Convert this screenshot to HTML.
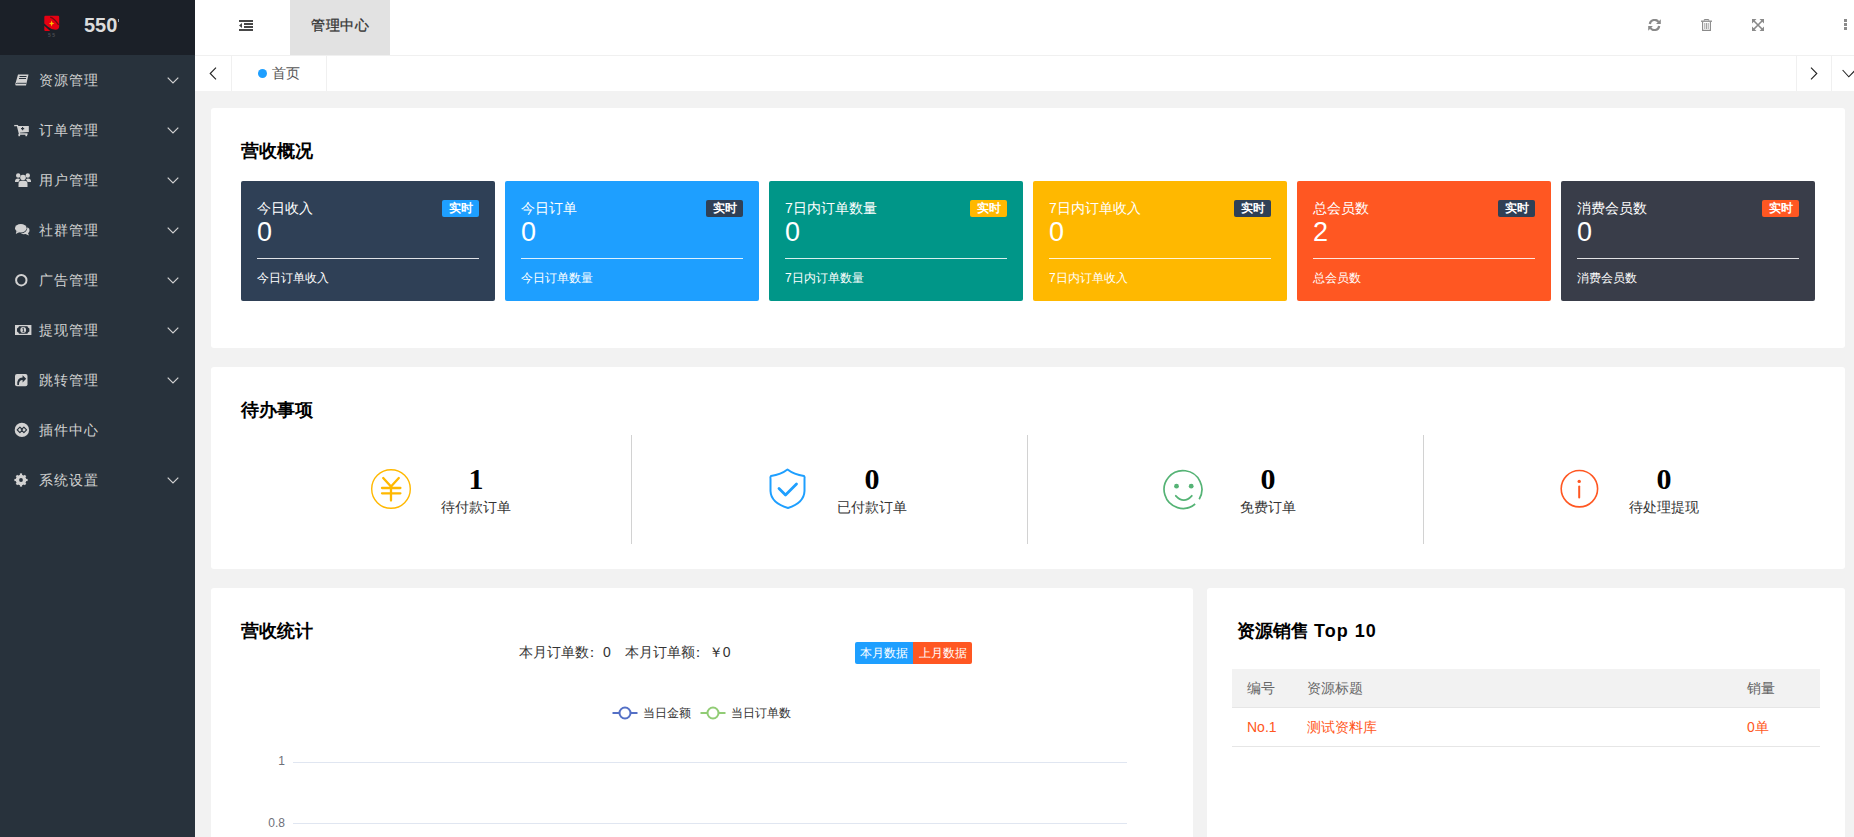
<!DOCTYPE html>
<html><head><meta charset="utf-8">
<style>
*{margin:0;padding:0;box-sizing:border-box}
html,body{width:1854px;height:837px;overflow:hidden;background:#f2f2f2;font-family:"Liberation Sans",sans-serif;font-size:14px;color:#333}
.abs{position:absolute}
#side{position:absolute;left:0;top:0;width:195px;height:837px;background:#28323c}
#logo{position:absolute;left:0;top:0;width:195px;height:55px;background:#1b2028}
.mi{position:absolute;left:0;width:195px;height:50px;line-height:50px;color:#d2d2d2;font-size:14px}
.mi .t{position:absolute;left:39px;top:0;letter-spacing:1px}
.mi svg.ic{position:absolute}
.mi svg.ch{position:absolute;left:167px;top:22px}
#hdr{position:absolute;left:195px;top:0;width:1659px;height:55px;background:#fff}
#tabs{position:absolute;left:195px;top:55px;width:1659px;height:36px;background:#fff;border-top:1px solid #f0f0f0}
.card{position:absolute;background:#fff;border-radius:3px}
.h2{position:absolute;font-size:18px;font-weight:bold;color:#000;line-height:24px;white-space:nowrap}
.sc{position:absolute;top:181px;width:254px;height:120px;border-radius:2px;color:#fff}
.sc .a{position:absolute;left:16px;top:197px}
</style></head><body>
<div id="side">
  <div id="logo">
    <svg class="abs" style="left:44px;top:15px" width="17" height="24" viewBox="0 0 17 24">
      <path d="M0.3 2 Q0.3 0.8 1.5 0.8 H14 Q15.2 0.8 15.2 2 V11 Q15.2 14.8 11.5 14.8 Q7.5 14.8 4 11.8 L0.3 8.6Z" fill="#e60012"/>
      <path d="M0.3 10.8 L6.2 16 H1.3 Q0.3 16 0.3 15Z" fill="#e60012"/>
      <path d="M6.2 2.2 Q10.5 3.6 14.6 9.8" stroke="#5a0a10" stroke-width="1.3" fill="none" opacity="0.85"/>
      <path d="M7.6 5.6 L8.4 7.7 L10.4 8.5 L8.4 9.3 L7.6 11.4 L6.8 9.3 L4.8 8.5 L6.8 7.7Z" fill="#ffc000"/>
      <text x="3.9" y="22" font-size="5" fill="#4a4d52" font-family="Liberation Sans" font-weight="bold" style="letter-spacing:1.6px">55</text>
    </svg>
    <div class="abs" style="left:84px;top:13px;font-size:20px;font-weight:bold;color:#dcdcdc;line-height:24px">550</div>
    <div class="abs" style="left:118px;top:19px;width:1px;height:3px;background:#9ab"></div>
  </div>
<div class="mi" style="top:55px"><svg class="ic" style="left:15px;top:19px" width="14" height="13" viewBox="0 0 14 13"><path d="M3 0.5 H13.5 L11 11.5 H1.5 Q0 11.5 0.3 10 Z" fill="#d2d2d2"/><path d="M4.5 2.5 H11.5 M4 4.5 H11" stroke="#28323c" stroke-width="1"/><path d="M1.2 10 Q1.3 9.3 2.2 9.3 H11.3" stroke="#28323c" stroke-width="0.9" fill="none"/></svg><span class="t">资源管理</span><svg class="ch" width="12" height="7" viewBox="0 0 12 7"><path d="M0.7 0.7 L6 6 L11.3 0.7" stroke="#d2d2d2" stroke-width="1.2" fill="none"/></svg></div>
<div class="mi" style="top:105px"><svg class="ic" style="left:14px;top:19px" width="16" height="14" viewBox="0 0 16 14"><path d="M0.2 1.6 H4" stroke="#d2d2d2" stroke-width="1.3"/><path d="M3.4 1.3 L5.6 10 H13.6" stroke="#d2d2d2" stroke-width="1.4" fill="none"/><path d="M3.8 2 H14.8 V7.9 L5.3 8.7Z" fill="#d2d2d2"/><rect x="4.4" y="10" width="1.7" height="2.2" fill="#d2d2d2"/><rect x="11.4" y="10" width="1.7" height="2.2" fill="#d2d2d2"/><path d="M8.6 3 V6.2 M7 4.6 H10.2" stroke="#28323c" stroke-width="1.1"/></svg><span class="t">订单管理</span><svg class="ch" width="12" height="7" viewBox="0 0 12 7"><path d="M0.7 0.7 L6 6 L11.3 0.7" stroke="#d2d2d2" stroke-width="1.2" fill="none"/></svg></div>
<div class="mi" style="top:155px"><svg class="ic" style="left:15px;top:18px" width="16" height="14" viewBox="0 0 16 14"><circle cx="3.2" cy="2.5" r="2.2" fill="#d2d2d2"/><circle cx="12.8" cy="2.5" r="2.2" fill="#d2d2d2"/><circle cx="8" cy="4.5" r="2.8" fill="#d2d2d2"/><path d="M0 8.5 Q0 5.5 3 5.5 Q4.5 5.5 5 6.5 Q3.5 8 3.5 9 H0Z M16 8.5 Q16 5.5 13 5.5 Q11.5 5.5 11 6.5 Q12.5 8 12.5 9 H16Z" fill="#d2d2d2"/><path d="M3.5 14 V11 Q3.5 7.8 6.5 7.8 H9.5 Q12.5 7.8 12.5 11 V14Z" fill="#d2d2d2"/></svg><span class="t">用户管理</span><svg class="ch" width="12" height="7" viewBox="0 0 12 7"><path d="M0.7 0.7 L6 6 L11.3 0.7" stroke="#d2d2d2" stroke-width="1.2" fill="none"/></svg></div>
<div class="mi" style="top:205px"><svg class="ic" style="left:15px;top:19px" width="15" height="12" viewBox="0 0 15 12"><ellipse cx="5.8" cy="4.2" rx="5.8" ry="4.2" fill="#d2d2d2"/><path d="M1.5 7 L0.8 10 L4.5 8Z" fill="#d2d2d2"/><path d="M12.5 3.2 Q15 4.5 14.5 7 Q14 8.6 13 9.3 L14 11.5 L10.5 10 Q7.5 10.5 5.8 9.4 Q11.8 9 12.5 3.2Z" fill="#d2d2d2"/></svg><span class="t">社群管理</span><svg class="ch" width="12" height="7" viewBox="0 0 12 7"><path d="M0.7 0.7 L6 6 L11.3 0.7" stroke="#d2d2d2" stroke-width="1.2" fill="none"/></svg></div>
<div class="mi" style="top:255px"><svg class="ic" style="left:15px;top:19px" width="13" height="13" viewBox="0 0 13 13"><circle cx="6.3" cy="6.2" r="5.2" stroke="#d2d2d2" stroke-width="2" fill="none"/></svg><span class="t">广告管理</span><svg class="ch" width="12" height="7" viewBox="0 0 12 7"><path d="M0.7 0.7 L6 6 L11.3 0.7" stroke="#d2d2d2" stroke-width="1.2" fill="none"/></svg></div>
<div class="mi" style="top:305px"><svg class="ic" style="left:14.5px;top:20px" width="17" height="11" viewBox="0 0 17 11"><rect x="0" y="0" width="16.4" height="10" fill="#d2d2d2"/><path d="M4 1.3 H12.4 L13 2.5 L14.4 3.4 V6.6 L13 7.5 L12.4 8.7 H4 L3.4 7.5 L2 6.6 V3.4 L3.4 2.5Z" fill="#28323c"/><circle cx="8.2" cy="5" r="2.9" fill="#d2d2d2"/><path d="M7.4 3.8 L8.4 3.2 V6.6 M7.5 6.7 H9.3" stroke="#28323c" stroke-width="0.9" fill="none"/></svg><span class="t">提现管理</span><svg class="ch" width="12" height="7" viewBox="0 0 12 7"><path d="M0.7 0.7 L6 6 L11.3 0.7" stroke="#d2d2d2" stroke-width="1.2" fill="none"/></svg></div>
<div class="mi" style="top:355px"><svg class="ic" style="left:15px;top:19px" width="13" height="13" viewBox="0 0 13 13"><rect x="0" y="0" width="12.5" height="12.2" rx="2" fill="#d2d2d2"/><path d="M2.3 11 Q1.6 3.7 7.6 3.5 V1.2 L11.2 4.8 L7.6 8.4 V6 Q4 5.9 3.9 11Z" fill="#28323c"/></svg><span class="t">跳转管理</span><svg class="ch" width="12" height="7" viewBox="0 0 12 7"><path d="M0.7 0.7 L6 6 L11.3 0.7" stroke="#d2d2d2" stroke-width="1.2" fill="none"/></svg></div>
<div class="mi" style="top:405px"><svg class="ic" style="left:14px;top:17px" width="16" height="16" viewBox="0 0 16 16"><circle cx="7.9" cy="7.9" r="7.2" fill="#d2d2d2"/><path d="M3.2 7.9 L5.9 5.2 L8.6 7.9 L5.9 10.6Z M7.2 7.9 L9.9 5.2 L12.6 7.9 L9.9 10.6Z" stroke="#28323c" stroke-width="1.2" fill="none" stroke-linejoin="round"/></svg><span class="t">插件中心</span></div>
<div class="mi" style="top:455px"><svg class="ic" style="left:14px;top:18px" width="14" height="14" viewBox="0 0 14 14"><g fill="#d2d2d2"><circle cx="7" cy="7" r="5.3"/><rect x="5.9" y="0.4" width="2.2" height="13.2"/><rect x="0.4" y="5.9" width="13.2" height="2.2"/><rect x="5.9" y="0.6" width="2.2" height="12.8" transform="rotate(45 7 7)"/><rect x="5.9" y="0.6" width="2.2" height="12.8" transform="rotate(-45 7 7)"/></g><circle cx="7" cy="7" r="1.9" fill="#28323c"/></svg><span class="t">系统设置</span><svg class="ch" width="12" height="7" viewBox="0 0 12 7"><path d="M0.7 0.7 L6 6 L11.3 0.7" stroke="#d2d2d2" stroke-width="1.2" fill="none"/></svg></div>
</div>
<div id="hdr">
  <svg class="abs" style="left:44px;top:20px" width="14" height="11" viewBox="0 0 14 11"><path d="M0 0 H14 V2 H0Z M5 3 H14 V5 H5Z M5 6 H14 V8 H5Z M0 9 H14 V11 H0Z" fill="#474747"/><path d="M0 5.5 L3 3 V8Z" fill="#474747"/></svg>
  <div class="abs" style="left:95px;top:0;width:100px;height:55px;background:#e2e2e2;line-height:50px;text-align:center;color:#333;font-size:14px;letter-spacing:0.5px;-webkit-text-stroke:0.3px #333">管理中心</div>
  <svg class="abs" style="left:1453px;top:19px" width="13" height="12" viewBox="0 0 13 12"><path d="M1.8 5 A4.8 4.8 0 0 1 10.5 3" stroke="#8a8a8a" stroke-width="2.2" fill="none"/><path d="M12.8 0.3 V5 H8.1Z" fill="#8a8a8a"/><path d="M11.2 7 A4.8 4.8 0 0 1 2.5 9" stroke="#8a8a8a" stroke-width="2.2" fill="none"/><path d="M0.2 11.7 V7 H4.9Z" fill="#8a8a8a"/></svg>
  <svg class="abs" style="left:1506px;top:19px" width="11" height="12" viewBox="0 0 11 12"><path d="M0 2.2 H11" stroke="#8a8a8a" stroke-width="1.3"/><path d="M3.3 1.6 V0.5 H7.7 V1.6" stroke="#8a8a8a" stroke-width="1" fill="none"/><path d="M1.6 2.5 V11.4 H9.4 V2.5" stroke="#8a8a8a" stroke-width="1.1" fill="none"/><path d="M3.8 4 V10 M5.5 4 V10 M7.2 4 V10" stroke="#8a8a8a" stroke-width="0.8"/></svg>
  <svg class="abs" style="left:1557px;top:19px" width="12" height="12" viewBox="0 0 12 12"><path d="M1.5 1.5 L10.5 10.5 M10.5 1.5 L1.5 10.5" stroke="#8a8a8a" stroke-width="1.6"/><path d="M0 0 H4.5 L0 4.5Z M12 0 V4.5 L7.5 0Z M0 12 V7.5 L4.5 12Z M12 12 H7.5 L12 7.5Z" fill="#8a8a8a"/></svg>
  <div class="abs" style="left:1649px;top:19px;width:3px;height:3px;background:#8a8a8a;box-shadow:0 4px 0 #8a8a8a,0 8px 0 #8a8a8a"></div>
</div>
<div id="tabs">
  <svg class="abs" style="left:14px;top:11px" width="8" height="13" viewBox="0 0 8 13"><path d="M7 0.6 L1.2 6.5 L7 12.4" stroke="#222" stroke-width="1.1" fill="none"/></svg>
  <div class="abs" style="left:36px;top:0;width:1px;height:35px;background:#f0f0f0"></div>
  <div class="abs" style="left:131px;top:0;width:1px;height:35px;background:#f0f0f0"></div>
  <div class="abs" style="left:63px;top:13px;width:9px;height:9px;border-radius:50%;background:#1e9fff"></div>
  <div class="abs" style="left:77px;top:0;line-height:34px;color:#555;font-size:14px">首页</div>
  <div class="abs" style="left:1601px;top:0;width:1px;height:35px;background:#f0f0f0"></div>
  <div class="abs" style="left:1636px;top:0;width:1px;height:35px;background:#f0f0f0"></div>
  <svg class="abs" style="left:1615px;top:11px" width="8" height="13" viewBox="0 0 8 13"><path d="M1 0.6 L6.8 6.5 L1 12.4" stroke="#222" stroke-width="1.1" fill="none"/></svg>
  <svg class="abs" style="left:1647px;top:13px" width="14" height="9" viewBox="0 0 14 9"><path d="M0.6 1 L6.8 7.8 L13.4 1" stroke="#222" stroke-width="1.1" fill="none"/></svg>
</div>
<div class="card" style="left:211px;top:108px;width:1634px;height:240px"></div>
<div class="h2" style="left:241px;top:139px">营收概况</div>
<div class="sc" style="left:241px;background:#2f4056">
  <div class="abs" style="left:16px;top:17px;font-size:14px;line-height:20px">今日收入</div>
  <div class="abs" style="left:201px;top:19px;width:37px;height:17px;border-radius:2px;background:#1e9fff;font-size:12px;font-weight:bold;line-height:17px;text-align:center">实时</div>
  <div class="abs" style="left:16px;top:36px;font-size:27px;line-height:30px">0</div>
  <div class="abs" style="left:16px;top:77px;width:222px;height:1px;background:rgba(255,255,255,.85)"></div>
  <div class="abs" style="left:16px;top:88px;font-size:12px;line-height:18px">今日订单收入</div>
</div>
<div class="sc" style="left:505px;background:#1e9fff">
  <div class="abs" style="left:16px;top:17px;font-size:14px;line-height:20px">今日订单</div>
  <div class="abs" style="left:201px;top:19px;width:37px;height:17px;border-radius:2px;background:#2f4056;font-size:12px;font-weight:bold;line-height:17px;text-align:center">实时</div>
  <div class="abs" style="left:16px;top:36px;font-size:27px;line-height:30px">0</div>
  <div class="abs" style="left:16px;top:77px;width:222px;height:1px;background:rgba(255,255,255,.85)"></div>
  <div class="abs" style="left:16px;top:88px;font-size:12px;line-height:18px">今日订单数量</div>
</div>
<div class="sc" style="left:769px;background:#009688">
  <div class="abs" style="left:16px;top:17px;font-size:14px;line-height:20px">7日内订单数量</div>
  <div class="abs" style="left:201px;top:19px;width:37px;height:17px;border-radius:2px;background:#ffb800;font-size:12px;font-weight:bold;line-height:17px;text-align:center">实时</div>
  <div class="abs" style="left:16px;top:36px;font-size:27px;line-height:30px">0</div>
  <div class="abs" style="left:16px;top:77px;width:222px;height:1px;background:rgba(255,255,255,.85)"></div>
  <div class="abs" style="left:16px;top:88px;font-size:12px;line-height:18px">7日内订单数量</div>
</div>
<div class="sc" style="left:1033px;background:#ffb800">
  <div class="abs" style="left:16px;top:17px;font-size:14px;line-height:20px">7日内订单收入</div>
  <div class="abs" style="left:201px;top:19px;width:37px;height:17px;border-radius:2px;background:#2f4056;font-size:12px;font-weight:bold;line-height:17px;text-align:center">实时</div>
  <div class="abs" style="left:16px;top:36px;font-size:27px;line-height:30px">0</div>
  <div class="abs" style="left:16px;top:77px;width:222px;height:1px;background:rgba(255,255,255,.85)"></div>
  <div class="abs" style="left:16px;top:88px;font-size:12px;line-height:18px">7日内订单收入</div>
</div>
<div class="sc" style="left:1297px;background:#ff5722">
  <div class="abs" style="left:16px;top:17px;font-size:14px;line-height:20px">总会员数</div>
  <div class="abs" style="left:201px;top:19px;width:37px;height:17px;border-radius:2px;background:#2f4056;font-size:12px;font-weight:bold;line-height:17px;text-align:center">实时</div>
  <div class="abs" style="left:16px;top:36px;font-size:27px;line-height:30px">2</div>
  <div class="abs" style="left:16px;top:77px;width:222px;height:1px;background:rgba(255,255,255,.85)"></div>
  <div class="abs" style="left:16px;top:88px;font-size:12px;line-height:18px">总会员数</div>
</div>
<div class="sc" style="left:1561px;background:#393d49">
  <div class="abs" style="left:16px;top:17px;font-size:14px;line-height:20px">消费会员数</div>
  <div class="abs" style="left:201px;top:19px;width:37px;height:17px;border-radius:2px;background:#ff5722;font-size:12px;font-weight:bold;line-height:17px;text-align:center">实时</div>
  <div class="abs" style="left:16px;top:36px;font-size:27px;line-height:30px">0</div>
  <div class="abs" style="left:16px;top:77px;width:222px;height:1px;background:rgba(255,255,255,.85)"></div>
  <div class="abs" style="left:16px;top:88px;font-size:12px;line-height:18px">消费会员数</div>
</div>
<div class="card" style="left:211px;top:367px;width:1634px;height:202px"></div>
<div class="h2" style="left:241px;top:398px">待办事项</div>
<div class="abs" style="left:631px;top:435px;width:1px;height:109px;background:#d2d2d2"></div>
<div class="abs" style="left:1027px;top:435px;width:1px;height:109px;background:#d2d2d2"></div>
<div class="abs" style="left:1423px;top:435px;width:1px;height:109px;background:#d2d2d2"></div>
<svg class="abs" style="left:370px;top:468px" width="42" height="42" viewBox="0 0 42 42"><circle cx="21" cy="21" r="19.3" stroke="#ffb800" stroke-width="1.4" fill="none"/><path d="M13.2 10 L21 18.5 L28.8 10 M21 18.5 V32.5 M12 20 H30.4 M12 25.3 H30.4" stroke="#ffb800" stroke-width="2.3" stroke-linecap="round" fill="none"/></svg>
<div class="abs" style="left:416px;top:463px;width:120px;text-align:center;font-family:'Liberation Serif',serif;font-weight:bold;font-size:30px;line-height:32px;color:#000">1</div>
<div class="abs" style="left:416px;top:497px;width:120px;text-align:center;font-size:14px;line-height:20px;color:#333">待付款订单</div>
<svg class="abs" style="left:767px;top:467px" width="40" height="43" viewBox="0 0 40 43"><path d="M20.5 2.5 Q14 7.5 4 9 Q3 10 3.5 12 V24 Q4 36 21 41 Q37 36 37.5 24 V12 Q38 10 37 9 Q27 7.5 20.5 2.5Z" stroke="#1e9fff" stroke-width="2" fill="none" stroke-linejoin="round"/><path d="M12 21.5 L18.5 28 L29.5 17" stroke="#1e9fff" stroke-width="2.8" stroke-linecap="round" stroke-linejoin="round" fill="none"/></svg>
<div class="abs" style="left:812px;top:463px;width:120px;text-align:center;font-family:'Liberation Serif',serif;font-weight:bold;font-size:30px;line-height:32px;color:#000">0</div>
<div class="abs" style="left:812px;top:497px;width:120px;text-align:center;font-size:14px;line-height:20px;color:#333">已付款订单</div>
<svg class="abs" style="left:1162px;top:468px" width="42" height="42" viewBox="0 0 42 42"><path d="M33.15 35.98 A18.9 18.9 0 1 1 37.2 31.23" stroke="#55b375" stroke-width="1.7" fill="none"/><circle cx="14.5" cy="18.2" r="2.4" fill="#55b375"/><circle cx="29.2" cy="18.2" r="2.4" fill="#55b375"/><path d="M13.8 27.8 Q21.8 36.5 29.8 27.8" stroke="#55b375" stroke-width="1.8" fill="none" stroke-linecap="round"/></svg>
<div class="abs" style="left:1208px;top:463px;width:120px;text-align:center;font-family:'Liberation Serif',serif;font-weight:bold;font-size:30px;line-height:32px;color:#000">0</div>
<div class="abs" style="left:1208px;top:497px;width:120px;text-align:center;font-size:14px;line-height:20px;color:#333">免费订单</div>
<svg class="abs" style="left:1559px;top:468px" width="42" height="42" viewBox="0 0 42 42"><circle cx="20.4" cy="20.7" r="18.2" stroke="#ff5722" stroke-width="1.6" fill="none"/><circle cx="20.2" cy="13.4" r="1.7" fill="#ff5722"/><path d="M20.2 18.5 V29.6" stroke="#ff5722" stroke-width="2" stroke-linecap="round"/></svg>
<div class="abs" style="left:1604px;top:463px;width:120px;text-align:center;font-family:'Liberation Serif',serif;font-weight:bold;font-size:30px;line-height:32px;color:#000">0</div>
<div class="abs" style="left:1604px;top:497px;width:120px;text-align:center;font-size:14px;line-height:20px;color:#333">待处理提现</div>
<div class="card" style="left:211px;top:588px;width:982px;height:260px"></div>
<div class="h2" style="left:241px;top:619px">营收统计</div>
<div class="abs" style="left:519px;top:642px;font-size:14px;line-height:20px;color:#333;white-space:pre">本月订单数<span style="margin-left:-4px;margin-right:4px">：</span>0<span style="margin-left:14px">本月订单额</span><span style="margin-left:-4px;margin-right:4px">：</span>￥0</div>
<div class="abs" style="left:855px;top:642px;width:58px;height:22px;background:#1e9fff;color:#fff;font-size:12px;line-height:22px;text-align:center;border-radius:2px 0 0 2px">本月数据</div>
<div class="abs" style="left:913px;top:642px;width:59px;height:22px;background:#ff5722;color:#fff;font-size:12px;line-height:22px;text-align:center;border-radius:0 2px 2px 0">上月数据</div>
<svg class="abs" style="left:612px;top:705px" width="26" height="16" viewBox="0 0 26 16"><path d="M0.5 8 H25.5" stroke="#5470c6" stroke-width="2"/><circle cx="13" cy="8" r="5.5" stroke="#5470c6" stroke-width="2" fill="#fff"/></svg>
<div class="abs" style="left:643px;top:704px;font-size:12px;line-height:18px;color:#333">当日金额</div>
<svg class="abs" style="left:700px;top:705px" width="26" height="16" viewBox="0 0 26 16"><path d="M0.5 8 H25.5" stroke="#91cc75" stroke-width="2"/><circle cx="13" cy="8" r="5.5" stroke="#91cc75" stroke-width="2" fill="#fff"/></svg>
<div class="abs" style="left:731px;top:704px;font-size:12px;line-height:18px;color:#333">当日订单数</div>
<div class="abs" style="left:293px;top:762px;width:834px;height:1px;background:#e0e6f1"></div>
<div class="abs" style="left:293px;top:823px;width:834px;height:1px;background:#e0e6f1"></div>
<div class="abs" style="left:240px;top:753px;width:45px;text-align:right;font-size:12px;line-height:16px;color:#6e7079">1</div>
<div class="abs" style="left:240px;top:815px;width:45px;text-align:right;font-size:12px;line-height:16px;color:#6e7079">0.8</div>
<div class="card" style="left:1207px;top:588px;width:638px;height:260px"></div>
<div class="h2" style="left:1237px;top:619px">资源销售 <span style="letter-spacing:1px">Top 10</span></div>
<div class="abs" style="left:1232px;top:669px;width:588px;height:39px;background:#f2f2f2;border-bottom:1px solid #e6e6e6"></div>
<div class="abs" style="left:1232px;top:746px;width:588px;height:1px;background:#e6e6e6"></div>
<div class="abs" style="left:1247px;top:678px;font-size:14px;line-height:20px;color:#666">编号</div>
<div class="abs" style="left:1307px;top:678px;font-size:14px;line-height:20px;color:#666">资源标题</div>
<div class="abs" style="left:1747px;top:678px;font-size:14px;line-height:20px;color:#666">销量</div>
<div class="abs" style="left:1247px;top:717px;font-size:14px;line-height:20px;color:#ff5722">No.1</div>
<div class="abs" style="left:1307px;top:717px;font-size:14px;line-height:20px;color:#ff5722">测试资料库</div>
<div class="abs" style="left:1747px;top:717px;font-size:14px;line-height:20px;color:#ff5722">0单</div>
</body></html>
